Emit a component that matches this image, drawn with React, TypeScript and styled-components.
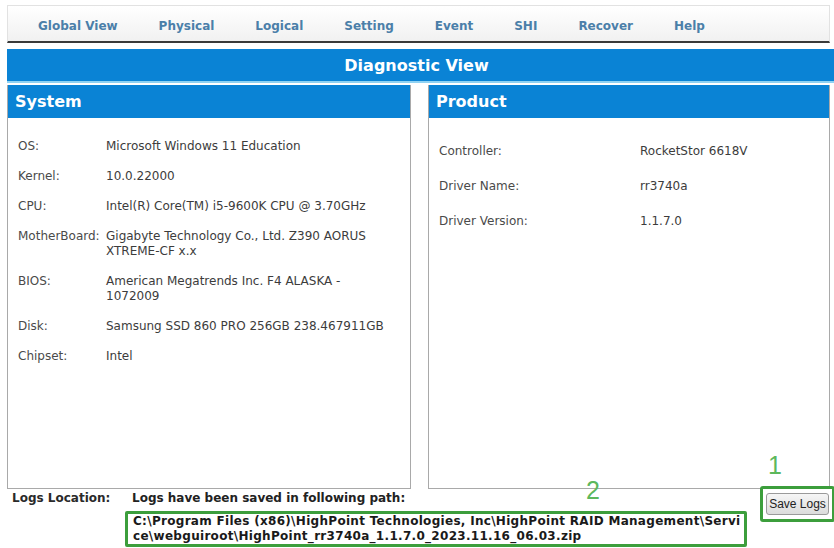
import React from "react"
import styled, { createGlobalStyle } from "styled-components"

const GlobalStyle = createGlobalStyle`
  body {
    margin: 0;
    background: #ffffff;
    font-family: "DejaVu Sans", Verdana, sans-serif;
  }
`

const Page = styled.div`
  width: 834px;
  height: 548px;
  padding-left: 7px;
  box-sizing: border-box;
  overflow: hidden;
`

const NavBar = styled.nav`
  margin-top: 5px;
  margin-right: 4px;
  border: 1px solid #e2e2e2;
  border-bottom: 2px solid #3a3a3a;
  background: linear-gradient(#ffffff, #f1f1f1);
  display: flex;
  align-items: center;
  padding: 4px 0 0 30px;
  height: 31px;
  gap: 41px;
`

const NavItem = styled.a`
  font-size: 12px;
  font-weight: bold;
  color: #4b7fa9;
  text-decoration: none;
`

const TitleBar = styled.div`
  margin-top: 6px;
  height: 32px;
  background: #0a83d5;
  border-bottom: 2px solid #8fd2f3;
  color: #ffffff;
  font-weight: bold;
  font-size: 16px;
  display: flex;
  align-items: center;
  justify-content: center;
  padding-right: 8px;
`

const Panels = styled.div`
  display: flex;
  gap: 17px;
  margin-top: 2px;
  height: 404px;
`

const Panel = styled.section<{ $width: number }>`
  width: ${(p) => p.$width}px;
  display: flex;
  flex-direction: column;
  border: 1px solid #a9a9a9;
  border-top: none;
  box-sizing: border-box;
`

const PanelHeader = styled.h2`
  margin: 0;
  height: 33px;
  background: #0a83d5;
  color: #ffffff;
  font-size: 16px;
  font-weight: bold;
  display: flex;
  align-items: center;
  padding-left: 7px;
`

const InfoList = styled.div<{ $labelWidth: number; $gap: number; $top: number }>`
  padding: ${(p) => p.$top}px 0 0 10px;
  display: grid;
  grid-template-columns: ${(p) => p.$labelWidth}px 1fr;
  align-items: start;
  row-gap: ${(p) => p.$gap}px;
  font-size: 12px;
  line-height: 15px;
  color: #3c3c3c;
`

const Label = styled.span`
  color: #4a4a4a;
  white-space: nowrap;
`

const Value = styled.span`
  max-width: 290px;
`

const Footer = styled.div`
  display: grid;
  grid-template-columns: 118px 633px 1fr;
  font-size: 12px;
  font-weight: bold;
  color: #222;
`

const FooterLabel = styled.div`
  padding: 2px 0 0 5px;
  color: #2a2a2a;
`

const PathColumn = styled.div`
  padding-top: 2px;
  position: relative;
`

const PathHeading = styled.div`
  padding-left: 7px;
`

const PathBox = styled.div`
  margin-top: 6px;
  border: 3px solid #3c9e3c;
  border-radius: 2px;
  padding: 0 2px 0 5px;
  line-height: 15px;
  letter-spacing: 0.3px;
  color: #1a1a1a;
  width: 609px;
  word-break: break-all;
`

const ButtonColumn = styled.div`
  position: relative;
`

const SaveBox = styled.div`
  margin: -3px 0 0 2px;
  width: 69px;
  height: 30px;
  border: 3px solid #3c9e3c;
  border-radius: 3px;
  display: flex;
  align-items: center;
  justify-content: center;
`

const SaveButton = styled.button`
  font-family: "Liberation Sans", Arial, sans-serif;
  font-size: 12px;
  color: #222;
  background: linear-gradient(#f6f6f6, #dcdcdc);
  border: 1px solid #9a9a9a;
  border-radius: 3px;
  padding: 2px 2px;
  height: 22px;
`

const Marker = styled.span<{ $left: number; $top: number }>`
  position: absolute;
  left: ${(p) => p.$left}px;
  top: ${(p) => p.$top}px;
  font-family: "Liberation Sans", Arial, sans-serif;
  font-size: 25px;
  font-weight: normal;
  color: #5cb85c;
`

const systemRows = [
  { label: "OS:", value: "Microsoft Windows 11 Education" },
  { label: "Kernel:", value: "10.0.22000" },
  { label: "CPU:", value: "Intel(R) Core(TM) i5-9600K CPU @ 3.70GHz" },
  { label: "MotherBoard:", value: "Gigabyte Technology Co., Ltd. Z390 AORUS XTREME-CF x.x" },
  { label: "BIOS:", value: "American Megatrends Inc. F4 ALASKA - 1072009" },
  { label: "Disk:", value: "Samsung SSD 860 PRO 256GB 238.467911GB" },
  { label: "Chipset:", value: "Intel" },
]

const productRows = [
  { label: "Controller:", value: "RocketStor 6618V" },
  { label: "Driver Name:", value: "rr3740a" },
  { label: "Driver Version:", value: "1.1.7.0" },
]

const navItems = ["Global View", "Physical", "Logical", "Setting", "Event", "SHI", "Recover", "Help"]

export default function App() {
  return (
    <Page>
      <GlobalStyle />
      <NavBar>
        {navItems.map((item) => (
          <NavItem key={item}>{item}</NavItem>
        ))}
      </NavBar>
      <TitleBar>Diagnostic View</TitleBar>
      <Panels>
        <Panel $width={404}>
          <PanelHeader>System</PanelHeader>
          <InfoList $labelWidth={88} $gap={15} $top={21}>
            {systemRows.map((row) => (
              <React.Fragment key={row.label}>
                <Label>{row.label}</Label>
                <Value>{row.value}</Value>
              </React.Fragment>
            ))}
          </InfoList>
        </Panel>
        <Panel $width={402}>
          <PanelHeader>Product</PanelHeader>
          <InfoList $labelWidth={201} $gap={20} $top={26}>
            {productRows.map((row) => (
              <React.Fragment key={row.label}>
                <Label>{row.label}</Label>
                <Value>{row.value}</Value>
              </React.Fragment>
            ))}
          </InfoList>
        </Panel>
      </Panels>
      <Footer>
        <FooterLabel>Logs Location:</FooterLabel>
        <PathColumn>
          <PathHeading>Logs have been saved in following path:</PathHeading>
          <PathBox>
            C:\Program Files (x86)\HighPoint Technologies, Inc\HighPoint RAID Management\Service\webguiroot\HighPoint_rr3740a_1.1.7.0_2023.11.16_06.03.zip
          </PathBox>
          <Marker $left={461} $top={-13}>2</Marker>
        </PathColumn>
        <ButtonColumn>
          <Marker $left={10} $top={-38}>1</Marker>
          <SaveBox>
            <SaveButton>Save Logs</SaveButton>
          </SaveBox>
        </ButtonColumn>
      </Footer>
    </Page>
  )
}
